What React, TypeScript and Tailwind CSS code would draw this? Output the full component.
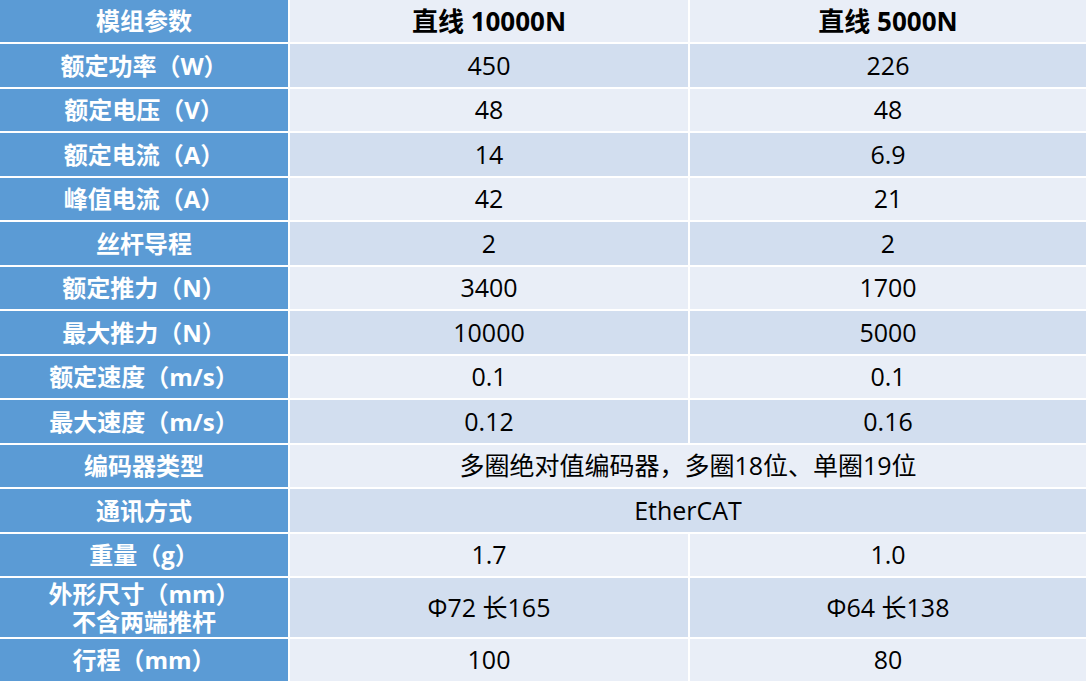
import React from 'react';

type Row = { label: React.ReactNode; a: string; b?: string; tall?: boolean };

const rows: Row[] = [
  { label: '额定功率（W）', a: '450', b: '226' },
  { label: '额定电压（V）', a: '48', b: '48' },
  { label: '额定电流（A）', a: '14', b: '6.9' },
  { label: '峰值电流（A）', a: '42', b: '21' },
  { label: '丝杆导程', a: '2', b: '2' },
  { label: '额定推力（N）', a: '3400', b: '1700' },
  { label: '最大推力（N）', a: '10000', b: '5000' },
  { label: '额定速度（m/s）', a: '0.1', b: '0.1' },
  { label: '最大速度（m/s）', a: '0.12', b: '0.16' },
  { label: '编码器类型', a: '多圈绝对值编码器，多圈18位、单圈19位' },
  { label: '通讯方式', a: 'EtherCAT' },
  { label: '重量（g）', a: '1.7', b: '1.0' },
  {
    label: (
      <div className="flex flex-col items-center">
        <span className="leading-[28px]">外形尺寸（mm）</span>
        <span className="leading-[28px]">不含两端推杆</span>
      </div>
    ),
    a: 'Φ72 长165',
    b: 'Φ64 长138',
    tall: true,
  },
  { label: '行程（mm）', a: '100', b: '80' },
];

const cell = 'flex items-center justify-center text-center';
const head = `${cell} bg-[#5b9bd5] text-white font-bold text-[24px]`;

export default function App() {
  return (
    <div
      className="w-[1088px] h-[685px] bg-white text-[25px] text-black overflow-hidden"
      style={{ fontFamily: '"Open Sans", "Noto Sans CJK SC", sans-serif' }}
    >
      <div className="grid grid-cols-[288px_398px_396px] gap-[2px]">
        <div className={`${head} h-[42px]`}>模组参数</div>
        <div className={`${cell} h-[42px] bg-[#e9eef7] font-bold text-[26px]`}>直线 10000N</div>
        <div className={`${cell} h-[42px] bg-[#e9eef7] font-bold text-[26px]`}>直线 5000N</div>
        {rows.map((r, i) => {
          const idx = i + 1;
          const h = r.tall ? 'h-[59px]' : idx % 2 === 1 ? 'h-[43px]' : 'h-[42px]';
          const bg = idx % 2 === 1 ? 'bg-[#d2deef]' : 'bg-[#e9eef7]';
          return (
            <React.Fragment key={i}>
              <div className={`${head} ${h}`}>{r.label}</div>
              {r.b === undefined ? (
                <div className={`${cell} ${h} ${bg} col-span-2`}>{r.a}</div>
              ) : (
                <>
                  <div className={`${cell} ${h} ${bg}`}>{r.a}</div>
                  <div className={`${cell} ${h} ${bg}`}>{r.b}</div>
                </>
              )}
            </React.Fragment>
          );
        })}
      </div>
    </div>
  );
}
